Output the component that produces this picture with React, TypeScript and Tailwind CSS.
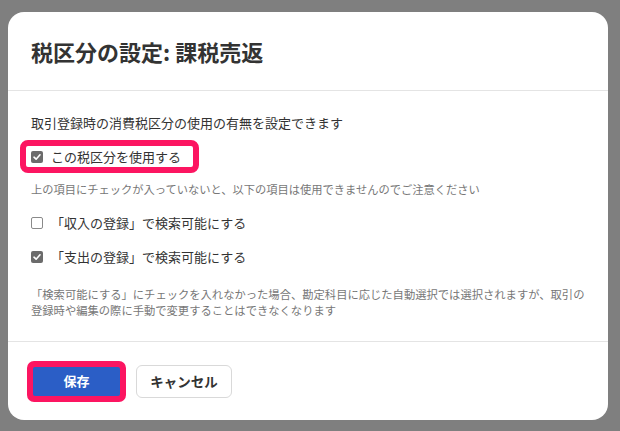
import React from "react";

const font = { fontFamily: '"Noto Sans CJK JP", "Noto Sans", sans-serif' };

function Check({ checked }: { checked: boolean }) {
  if (!checked) {
    return <span className="inline-block w-[12px] h-[12px] rounded-[2px] border border-[#8a8a8a] bg-white shrink-0" />;
  }
  return (
    <span className="inline-flex items-center justify-center w-[12px] h-[12px] rounded-[2px] bg-[#6b6b6b] shrink-0">
      <svg width="10" height="10" viewBox="0 0 10 10">
        <path d="M2 5.2 L4.1 7.2 L8 2.8" fill="none" stroke="#fff" strokeWidth="1.6" strokeLinecap="round" strokeLinejoin="round" />
      </svg>
    </span>
  );
}

export default function App() {
  return (
    <div className="w-[620px] h-[431px] bg-[#7f7f7f] overflow-hidden pl-[8px] pt-[12px]" style={font}>
      <div className="w-[600px] h-[408px] bg-white rounded-[16px] flex flex-col text-[#333]">
        <div className="h-[79px] flex items-center px-[23px] border-b border-[#e4e4e4] shrink-0">
          <h1 className="text-[22px] font-bold leading-none">税区分の設定: 課税売返</h1>
        </div>
        <div className="flex-1 px-[23px] pt-[22px] border-b border-[#e4e4e4]">
          <p className="text-[13px] leading-[20px]">取引登録時の消費税区分の使用の有無を設定できます</p>
          <div className="mt-[7px] ml-[-11px] w-[179px] h-[33px] border-[6px] border-[#fc1561] rounded-[8px] flex items-center pl-[5px] gap-[8px]">
            <Check checked />
            <span className="text-[13px] leading-none">この税区分を使用する</span>
          </div>
          <p className="mt-[6px] text-[11.25px] leading-[20px] text-[#777]">上の項目にチェックが入っていないと、以下の項目は使用できませんのでご注意ください</p>
          <div className="mt-[14px] h-[20px] flex items-center gap-[8px]">
            <Check checked={false} />
            <span className="text-[13px]">「収入の登録」で検索可能にする</span>
          </div>
          <div className="mt-[14px] h-[20px] flex items-center gap-[8px]">
            <Check checked />
            <span className="text-[13px]">「支出の登録」で検索可能にする</span>
          </div>
          <p className="mt-[19px] text-[11.3px] leading-[16px] text-[#777]">
            「検索可能にする」にチェックを入れなかった場合、勘定科目に応じた自動選択では選択されますが、取引の登録時や編集の際に手動で変更することはできなくなります
          </p>
        </div>
        <div className="h-[78px] shrink-0 flex items-center px-[19px] gap-[10px]">
          <div className="w-[99px] h-[41px] border-[6px] border-[#fc1561] rounded-[7px] bg-[#fc1561] flex">
            <button className="flex-1 bg-[#2b5ec6] rounded-[2px] text-white text-[13px] font-bold">保存</button>
          </div>
          <button className="w-[96px] h-[33px] border border-[#d9d9d9] rounded-[6px] bg-white text-[13.5px] font-bold text-[#333]">キャンセル</button>
        </div>
      </div>
    </div>
  );
}
